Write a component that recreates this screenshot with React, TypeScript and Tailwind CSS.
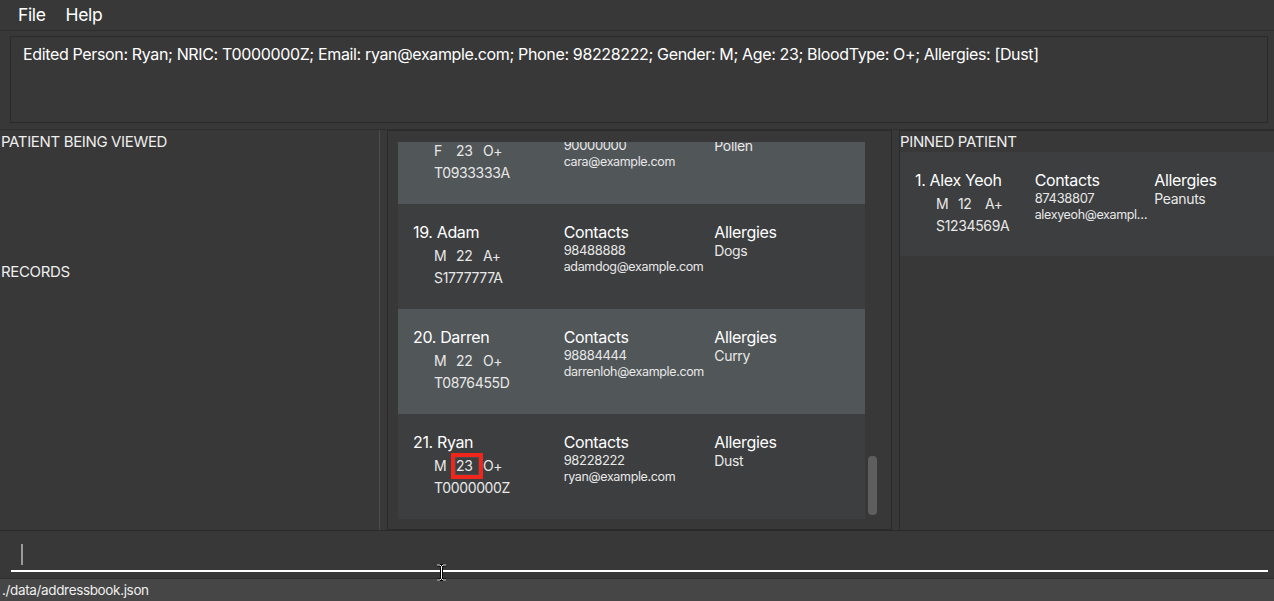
import React from 'react';

interface Patient {
  index: number;
  name: string;
  gender: string;
  age: string;
  blood: string;
  nric: string;
  phone: string;
  email: string;
  allergies: string[];
  highlightAge?: boolean;
}

const patients: Patient[] = [
  { index: 18, name: 'Cara', gender: 'F', age: '23', blood: 'O+', nric: 'T0933333A', phone: '90000000', email: 'cara@example.com', allergies: ['Pollen'] },
  { index: 19, name: 'Adam', gender: 'M', age: '22', blood: 'A+', nric: 'S1777777A', phone: '98488888', email: 'adamdog@example.com', allergies: ['Dogs'] },
  { index: 20, name: 'Darren', gender: 'M', age: '22', blood: 'O+', nric: 'T0876455D', phone: '98884444', email: 'darrenloh@example.com', allergies: ['Curry'] },
  { index: 21, name: 'Ryan', gender: 'M', age: '23', blood: 'O+', nric: 'T0000000Z', phone: '98228222', email: 'ryan@example.com', allergies: ['Dust'], highlightAge: true },
];

const pinned: Patient = {
  index: 1, name: 'Alex Yeoh', gender: 'M', age: '12', blood: 'A+', nric: 'S1234569A', phone: '87438807', email: 'alexyeoh@example.com', allergies: ['Peanuts'],
};

const font = { fontFamily: 'Inter, "Noto Sans", sans-serif' };

const PatientCard: React.FC<{ p: Patient; odd: boolean; height: string }> = ({ p, odd, height }) => (
  <div className={`${height} ${odd ? 'bg-[#515658]' : 'bg-[#3c3e3f]'} grid grid-cols-3 pl-[15px] pt-[18px] text-white`}>
    <div className="min-w-0">
      <div className="text-[16px] leading-[20px] whitespace-nowrap">{p.index}. {p.name}</div>
      <div className="pl-[21px] pt-[1px] text-[14px] leading-[23px] text-[#e8e8e8]">
        <div className="flex items-center h-[23px] mt-[1px]">
          <span className="w-[17px]">{p.gender}</span>
          <span
            className={`w-[32px] h-[26px] shrink-0 flex items-center pl-[1px] border-[4px] ${
              p.highlightAge ? 'border-[#f0261b] shadow-[inset_0_0_0_1px_#4a4a4a]' : 'border-transparent'
            }`}
          >
            {p.age}
          </span>
          <span>{p.blood}</span>
        </div>
        <div className="-mt-[1px]">{p.nric}</div>
      </div>
    </div>
    <div className="min-w-0">
      <div className="text-[16px] leading-[20px]">Contacts</div>
      <div className="text-[13px] leading-[16px] text-[#e8e8e8]">{p.phone}</div>
      <div className="text-[12.5px] leading-[17px] text-[#e8e8e8] truncate pr-[4px]">{p.email}</div>
    </div>
    <div className="min-w-0">
      <div className="text-[16px] leading-[20px]">Allergies</div>
      {p.allergies.map((a) => (
        <div key={a} className="text-[14px] leading-[18px] text-[#e8e8e8]">{a}</div>
      ))}
    </div>
  </div>
);

const IBeam: React.FC = () => (
  <svg className="absolute left-[436px] top-[564px]" width="11" height="17" viewBox="0 0 11 17">
    <path d="M1 1h3l1.5 1.5L7 1h3M5.5 2.5v12M1 16h3l1.5-1.5L7 16h3" stroke="#000" strokeWidth="3" fill="none" />
    <path d="M1 1h3l1.5 1.5L7 1h3M5.5 2.5v12M1 16h3l1.5-1.5L7 16h3" stroke="#fff" strokeWidth="1" fill="none" />
  </svg>
);

export default function App() {
  return (
    <div className="relative w-[1274px] h-[601px] overflow-hidden bg-[#383838] text-white flex flex-col tracking-[-0.022em]" style={font}>
      {/* menu bar */}
      <div className="h-[31px] shrink-0 flex items-center gap-[20px] pl-[18px] border-b border-[#2e2e2e] text-[17.5px]">
        <span>File</span>
        <span>Help</span>
      </div>

      {/* result display */}
      <div className="h-[99px] shrink-0 pl-[10px] pr-[6px] pt-[5px] border-b border-[#2e2e2e]">
        <div className="h-[87px] border border-[#2a2a2a] bg-[#383838] px-[12px] pt-[6px] text-[16px] leading-[22px] whitespace-nowrap">
          Edited Person: Ryan; NRIC: T0000000Z; Email: ryan@example.com; Phone: 98228222; Gender: M; Age: 23; BloodType: O+; Allergies: [Dust]
        </div>
      </div>

      {/* main */}
      <div className="h-[401px] shrink-0 flex border-b border-[#2a2a2a]">
        <div className="w-[380px] shrink-0 border-r border-[#4c4c4c] text-[15px] text-[#eeeeee]">
          <div className="h-[132px] pl-[1px] pt-[2px] leading-[20px]">PATIENT BEING VIEWED</div>
          <div className="pl-[1px] leading-[20px]">RECORDS</div>
        </div>

        <div className="w-[512px] shrink-0 pl-[7px]">
          <div className="h-full border border-[#2b2b2b] flex pl-[10px] pt-[11px] pb-[10px]">
            <div className="w-[467px] h-[377px] overflow-hidden">
              <div className="-mt-[43px]">
                {patients.map((p, i) => (
                  <PatientCard key={p.index} p={p} odd={i % 2 === 0} height="h-[105px]" />
                ))}
              </div>
            </div>
            <div className="flex-1 relative">
              <div className="absolute left-[3px] top-[314px] w-[9px] h-[59px] rounded-[4px] bg-[#5e5e5e]" />
            </div>
          </div>
        </div>

        <div className="flex-1 pl-[7px]">
          <div className="h-full border-l border-t border-[#2b2b2b]">
            <div className="text-[15px] leading-[20px] text-[#eeeeee] pt-[1px]">PINNED PATIENT</div>
            <PatientCard p={pinned} odd={false} height="h-[104px]" />
          </div>
        </div>
      </div>

      {/* command box */}
      <div className="h-[47px] shrink-0 pl-[11px] pr-[6px] pt-[13px]">
        <div className="h-[28px] border-b-2 border-white pl-[10px]">
          <div className="w-[1.5px] h-[21px] bg-[#9a9a9a]" />
        </div>
      </div>

      {/* status bar */}
      <div className="flex-1 bg-[#464646] pl-[2px] text-[13.5px] leading-[22px] text-[#eeeeee] border-t border-[#2e2e2e]">
        ./data/addressbook.json
      </div>

      <IBeam />
    </div>
  );
}
